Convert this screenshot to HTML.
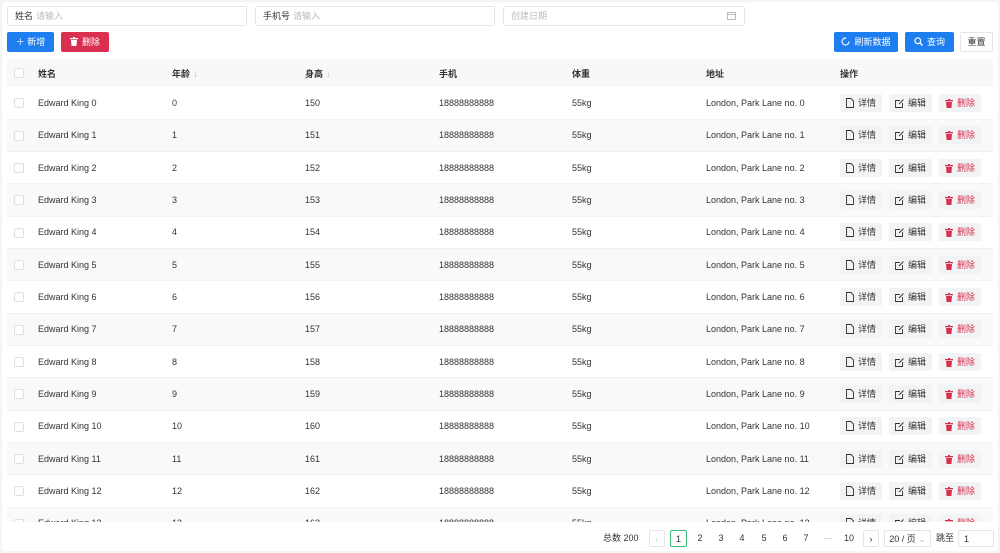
<!DOCTYPE html>
<html><head><meta charset="utf-8"><style>
*{box-sizing:border-box;margin:0;padding:0}
body{width:1000px;height:553px;background:#f4f5f7;font-family:"Liberation Sans","Noto Sans CJK SC",sans-serif;font-size:9px;color:#333;position:relative;overflow:hidden}
.card{position:absolute;left:2px;top:2px;width:996px;height:549px;background:#fff;border-radius:3px}
.abs{position:absolute}
.inp{position:absolute;top:6px;height:20px;border:1px solid #e3e5e8;border-radius:3px;padding-left:7px;line-height:18px;color:#333}
.inp span{color:#bbb;margin-left:3px}
.btn{position:absolute;top:32px;height:20px;border-radius:2px;color:#fff;line-height:20px;text-align:center;font-size:9px}
.blue{background:#1e7ef0}
.red{background:#d9304f}
table{position:absolute;left:7px;top:59px;width:986px;border-collapse:collapse;table-layout:fixed}
th{height:28px;background:#f7f8fa;text-align:left;font-weight:bold;color:#333;font-size:9px}
td{height:32.33px;font-size:9px;color:#333}
tr.alt td{background:#f8f9fa}
tbody tr td{border-bottom:1px solid #f0f1f3}
.cb{display:inline-block;width:10px;height:10px;border:1px solid #dcdfe3;border-radius:2px;background:#fff;vertical-align:middle}
.op{display:inline-block;height:18px;line-height:18px;background:#f2f3f5;border-radius:2px;padding:0 6px;margin-right:7px;color:#333;vertical-align:middle}
.op svg{vertical-align:-2px;margin-right:4px}
.op.d{color:#d9304f}
.arr{color:#bbb;font-weight:normal;margin-left:3px}
.tblclip{position:absolute;left:0;top:0;width:1000px;height:522px;overflow:hidden}
.pg{position:absolute;top:530px;height:17px;line-height:17px;font-size:9px;color:#333;text-align:center}
.pb{border:1px solid #e3e5e8;border-radius:2px;background:#fff}
</style></head><body>
<div class="card"></div>
<div class="inp" style="left:7px;width:240px">姓名<span>请输入</span></div>
<div class="inp" style="left:255px;width:240px">手机号<span>请输入</span></div>
<div class="inp" style="left:503px;width:242px;color:#bbb">创建日期
<svg class="abs" style="right:8px;top:5px" width="9" height="8" viewBox="0 0 9 8"><rect x=".5" y=".5" width="8" height="7" fill="none" stroke="#bbb"/><line x1="0" y1="2.5" x2="9" y2="2.5" stroke="#bbb"/></svg></div>
<div class="btn blue" style="left:7px;width:47px">＋ 新增</div>
<div class="btn red" style="left:61px;width:48px"><svg width="8" height="9" viewBox="0 0 8 9" style="vertical-align:-1px;margin-right:4px"><rect x="0" y="1" width="8" height="1.3" fill="#fff"/><rect x="3" y="0" width="2" height="1.2" fill="#fff"/><path d="M1 3h6l-.6 6H1.6z" fill="#fff"/></svg>删除</div>
<div class="btn blue" style="left:834px;width:64px"><svg width="9" height="9" viewBox="0 0 9 9" style="vertical-align:-1px;margin-right:4px"><path d="M4.5 1A3.5 3.5 0 1 0 8 4.5" fill="none" stroke="#fff" stroke-width="1.1"/><path d="M3.5 0l2 1-2 1.5z" fill="#fff"/></svg>刷新数据</div>
<div class="btn blue" style="left:905px;width:49px"><svg width="9" height="9" viewBox="0 0 9 9" style="vertical-align:-1px;margin-right:4px"><circle cx="3.8" cy="3.8" r="2.9" fill="none" stroke="#fff" stroke-width="1.2"/><line x1="6" y1="6" x2="8.5" y2="8.5" stroke="#fff" stroke-width="1.3"/></svg>查询</div>
<div class="btn" style="left:960px;width:33px;background:#fff;border:1px solid #e3e5e8;color:#333;line-height:18px">重置</div>
<div class="tblclip">
<table>
<colgroup><col style="width:24px"><col style="width:134px"><col style="width:133px"><col style="width:134px"><col style="width:133px"><col style="width:134px"><col style="width:134px"><col style="width:160px"></colgroup>
<thead><tr><th style="padding-left:7px"><span class="cb"></span></th><th style="padding-left:7px">姓名</th><th style="padding-left:7px">年龄<span class="arr">↓</span></th><th style="padding-left:7px">身高<span class="arr">↓</span></th><th style="padding-left:7px">手机</th><th style="padding-left:7px">体重</th><th style="padding-left:7px">地址</th><th style="padding-left:7px">操作</th></tr></thead>
<tbody id="tb"></tbody>
</table>
</div>
<div class="pg" style="left:603px">总数 200</div>
<div class="pg pb" style="left:649px;width:16px;color:#ccc">‹</div>
<div class="pg pb" style="left:670px;width:17px;border-color:#3cbf7a;color:#333">1</div>
<div class="pg" style="left:692px;width:16px">2</div>
<div class="pg" style="left:713px;width:16px">3</div>
<div class="pg" style="left:734px;width:16px">4</div>
<div class="pg" style="left:756px;width:16px">5</div>
<div class="pg" style="left:777px;width:16px">6</div>
<div class="pg" style="left:798px;width:16px">7</div>
<div class="pg" style="left:820px;width:16px;color:#999">···</div>
<div class="pg" style="left:841px;width:16px">10</div>
<div class="pg pb" style="left:863px;width:16px">›</div>
<div class="pg pb" style="left:884px;width:47px">20 / 页 <span style="color:#bbb">⌄</span></div>
<div class="pg" style="left:936px">跳至</div>
<div class="pg pb" style="left:958px;width:36px;text-align:left;padding-left:5px">1</div>
<script>
var h='';
for(var i=0;i<14;i++){
h+='<tr'+(i%2?' class="alt"':'')+'><td style="padding-left:7px"><span class="cb"></span></td><td style="padding-left:7px">Edward King '+i+'</td><td style="padding-left:7px">'+i+'</td><td style="padding-left:7px">'+(150+i)+'</td><td style="padding-left:7px">18888888888</td><td style="padding-left:7px">55kg</td><td style="padding-left:7px">London, Park Lane no. '+i+'</td><td style="padding-left:7px;white-space:nowrap">'+
'<span class="op"><svg width="8" height="10" viewBox="0 0 8 10"><path d="M.5.5h4.5l2.5 2.5v6.5h-7z" fill="none" stroke="#333" stroke-width=".9"/></svg>详情</span>'+
'<span class="op"><svg width="9" height="9" viewBox="0 0 9 9"><path d="M5 1.5H.5v7h7V4" fill="none" stroke="#333" stroke-width=".9"/><path d="M4 5l4.5-4.5" stroke="#333" stroke-width=".9"/></svg>编辑</span>'+
'<span class="op d"><svg width="8" height="9" viewBox="0 0 8 9"><rect x="0" y="1" width="8" height="1.3" fill="#d9304f"/><rect x="3" y="0" width="2" height="1.2" fill="#d9304f"/><path d="M1 3h6l-.6 6H1.6z" fill="#d9304f"/></svg>删除</span></td></tr>';
}
document.getElementById('tb').innerHTML=h;
</script>
</body></html>
